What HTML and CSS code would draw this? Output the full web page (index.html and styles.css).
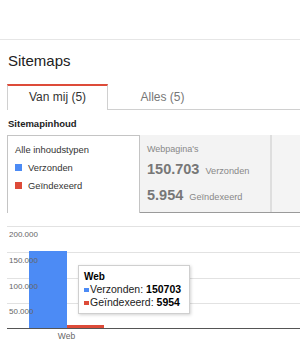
FILE: index.html
```html
<!DOCTYPE html>
<html lang="nl">
<head>
<meta charset="utf-8">
<title>Sitemaps</title>
<link rel="stylesheet" href="styles.css">
</head>
<body>
<div class="page">
  <div class="topbar"></div>
  <h1 class="title">Sitemaps</h1>
  <div class="tabs">
    <div class="tab tab-active">Van mij (5)</div>
    <div class="tab tab-idle">Alles (5)</div>
    <div class="tab-fill"></div>
  </div>
  <h2 class="section">Sitemapinhoud</h2>
  <div class="panels">
    <div class="types">
      <div class="types-row">Alle inhoudstypen</div>
      <div class="types-row"><span class="sw sw-blue"></span>Verzonden</div>
      <div class="types-row"><span class="sw sw-red"></span>Geïndexeerd</div>
    </div>
    <div class="stats">
      <div class="stat-col">
        <div class="stat-label">Webpagina's</div>
        <div class="stat-row"><span class="stat-num">150.703</span><span class="stat-unit">Verzonden</span></div>
        <div class="stat-row"><span class="stat-num">5.954</span><span class="stat-unit">Geïndexeerd</span></div>
      </div>
      <div class="stat-col-more"></div>
    </div>
  </div>
  <div class="chart">
    <div class="plot">
      <div class="grid-row grid-a"><span class="tick">200.000</span></div>
      <div class="grid-row grid-a"><span class="tick">150.000</span></div>
      <div class="grid-row grid-b"><span class="tick">100.000</span></div>
      <div class="grid-row grid-b"><span class="tick">50.000</span></div>
      <div class="bars">
        <div class="bar bar-blue" style="height:77px"></div>
        <div class="bar bar-red" style="height:3px"></div>
      </div>
      <div class="tooltip">
        <div class="tt-title">Web</div>
        <div class="tt-row"><span class="tt-sw sw-blue"></span>Verzonden: <b>150703</b></div>
        <div class="tt-row"><span class="tt-sw sw-red"></span>Geïndexeerd: <b>5954</b></div>
      </div>
    </div>
    <div class="xlabels">Web</div>
  </div>
</div>
</body>
</html>
```

FILE: styles.css
```css
html, body {
  margin: 0;
  padding: 0;
  background: #fff;
}

body {
  font-family: "Liberation Sans", Arial, sans-serif;
  color: #222;
  width: 300px;
  overflow: hidden;
}

.page {
  width: 300px;
}

.topbar {
  height: 39px;
  border-bottom: 1px solid #e6e6e6;
}

.title {
  margin: 12px 0 0 8px;
  font-size: 15px;
  line-height: 18px;
  font-weight: normal;
  color: #222;
}

.tabs {
  display: flex;
  margin: 14px 0 0 7px;
  height: 26px;
}

.tab {
  box-sizing: border-box;
  height: 26px;
  font-size: 12px;
  line-height: 15px;
  text-align: center;
  border-top: 2px solid transparent;
  padding-top: 4px;
}

.tab-active {
  width: 101px;
  border-top-color: #dd4b39;
  border-left: 1px solid #d0d0d0;
  border-right: 1px solid #d0d0d0;
  color: #333;
  background: #fff;
}

.tab-idle {
  width: 109px;
  color: #777;
  border-bottom: 1px solid #d0d0d0;
}

.tab-fill {
  flex: 1;
  border-bottom: 1px solid #d0d0d0;
}

.section {
  margin: 0 0 0 8px;
  padding-top: 8px;
  font-size: 9.5px;
  line-height: 12px;
  font-weight: bold;
  color: #222;
}

.panels {
  display: flex;
  margin: 5px 0 0 7px;
  height: 78px;
}

.types {
  box-sizing: border-box;
  width: 133px;
  border: 1px solid #c4c4c4;
  border-bottom: none;
  padding: 4.5px 0 0 7px;
  background: #fff;
}

.types-row {
  font-size: 9.4px;
  line-height: 18px;
  color: #333;
  white-space: nowrap;
}

.sw {
  display: inline-block;
  width: 7px;
  height: 7px;
  margin-right: 6px;
  vertical-align: baseline;
}

.sw-blue {
  background: #4c8bf5;
}

.sw-red {
  background: #dd4b39;
}

.stats {
  flex: 1;
  display: flex;
  box-sizing: border-box;
  background: #f3f3f3;
  border-bottom: 1px solid #9a9a9a;
}

.stat-col {
  box-sizing: border-box;
  width: 132px;
  border-right: 2px solid #dedede;
  padding: 7px 0 0 7px;
}

.stat-col-more {
  flex: 1;
  background: #f4f4f4;
}

.stat-label {
  font-size: 9px;
  line-height: 14px;
  color: #888;
}

.stat-row {
  margin-top: 2px;
  line-height: 22px;
  white-space: nowrap;
}

.stat-num {
  font-size: 14.5px;
  font-weight: bold;
  color: #777;
}

.stat-unit {
  margin-left: 6px;
  font-size: 9.2px;
  color: #888;
}

.chart {
  margin-top: 13px;
}

.plot {
  position: relative;
  margin-left: 7px;
  border-bottom: 1px solid #555;
}

.grid-row {
  box-sizing: border-box;
  border-top: 1px solid #e2e2e2;
  padding: 2.5px 0 0 2px;
}

.grid-a {
  height: 26px;
}

.grid-b {
  height: 25px;
}

.tick {
  position: relative;
  z-index: 1;
  display: block;
  font-size: 8px;
  line-height: 9px;
  color: #666;
}

.bars {
  position: absolute;
  left: 22px;
  bottom: 0;
  display: flex;
  align-items: flex-end;
}

.bar-blue {
  width: 38px;
  background: #4c8bf5;
}

.bar-red {
  width: 37px;
  background: #dd4b39;
}

.tooltip {
  position: absolute;
  z-index: 2;
  left: 71px;
  top: 39px;
  box-sizing: border-box;
  width: 112px;
  height: 49px;
  padding: 4px 0 0 5px;
  background: #fff;
  border: 1px solid #cfcfcf;
  box-shadow: 1px 1px 3px rgba(0, 0, 0, 0.18);
  font-size: 10.5px;
  line-height: 13px;
  color: #222;
  white-space: nowrap;
}

.tt-title {
  font-weight: bold;
  font-size: 10px;
  color: #000;
}

.tt-row b {
  color: #000;
}

.tt-sw {
  display: inline-block;
  width: 4.5px;
  height: 4.5px;
  margin-right: 1.5px;
  vertical-align: 1px;
}

.xlabels {
  margin: 2px 0 0 29px;
  width: 75px;
  text-align: center;
  font-size: 8.5px;
  line-height: 10px;
  color: #666;
}
```
